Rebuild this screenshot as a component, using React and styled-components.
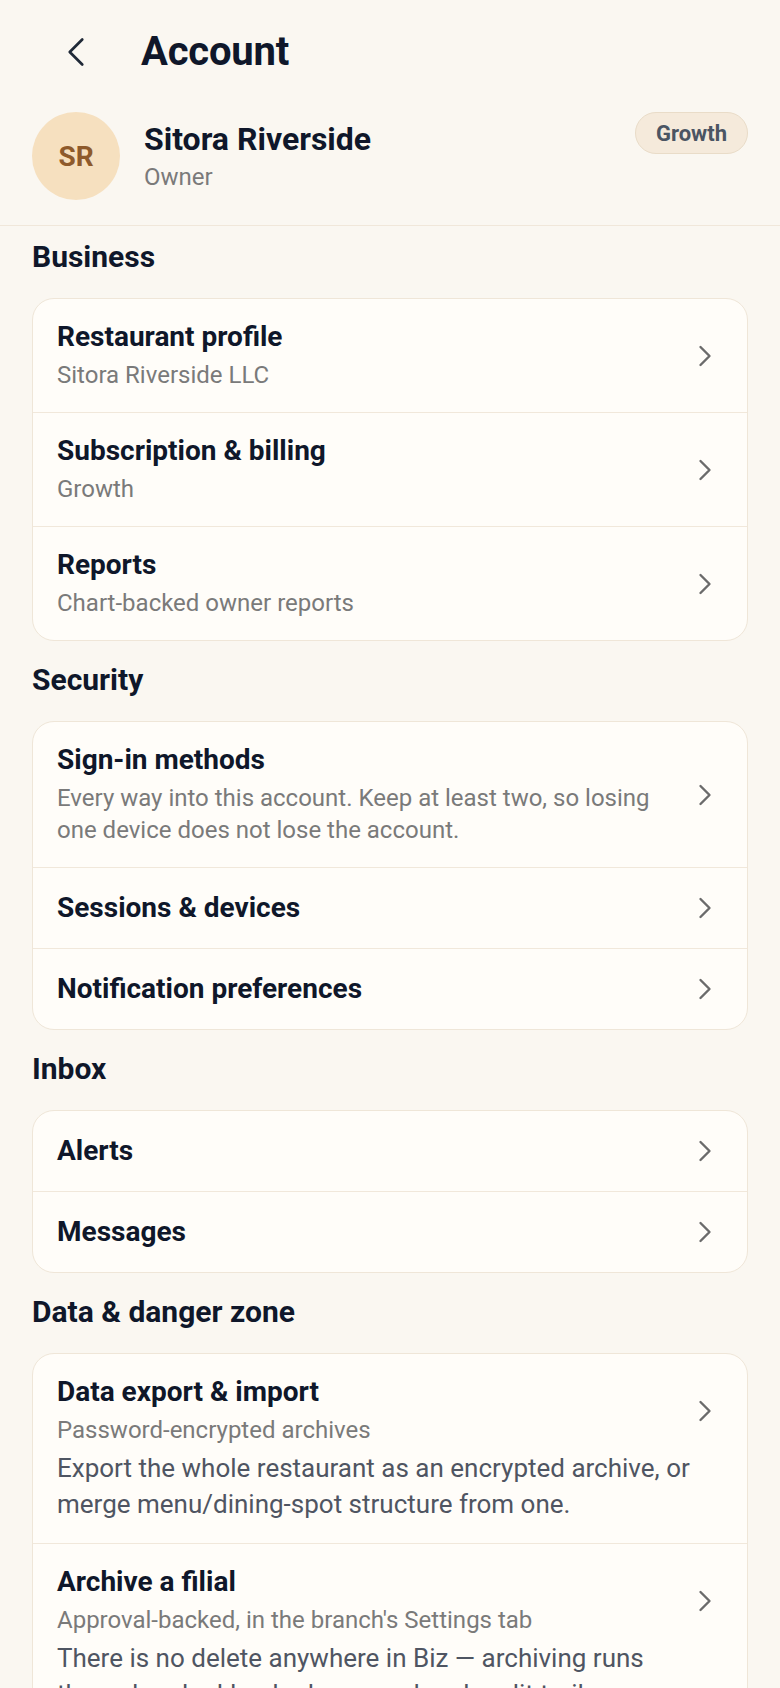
import React from "react";
import styled, { createGlobalStyle } from "styled-components";

const Global = createGlobalStyle`
  html, body { margin: 0; padding: 0; }
  body {
    background: #FAF7F1;
    font-family: Roboto, "Noto Sans", "Liberation Sans", sans-serif;
    color: #0F172A;
    -webkit-font-smoothing: antialiased;
  }
  * { box-sizing: border-box; }
`;

const Page = styled.div`
  width: 780px;
  min-height: 1688px;
  background: #FAF7F1;
`;

const Header = styled.header`
  display: flex;
  align-items: center;
  gap: 21px;
  padding: 24px 32px 0 32px;
  height: 80px;
`;

const BackButton = styled.button`
  width: 88px;
  height: 56px;
  border: none;
  background: transparent;
  padding: 0;
  display: flex;
  align-items: center;
  justify-content: center;
  color: #1F2937;
  cursor: pointer;
`;

const Title = styled.h1`
  margin: 0;
  font-size: 40px;
  line-height: 56px;
  font-weight: 700;
  color: #0F172A;
  letter-spacing: -0.2px;
`;

const Profile = styled.section`
  display: flex;
  align-items: center;
  gap: 24px;
  padding: 32px 32px 25px 32px;
  border-bottom: 1px solid #F0E7DA;
`;

const Avatar = styled.div`
  width: 88px;
  height: 88px;
  border-radius: 50%;
  background: #F6E0BF;
  color: #8E5A2B;
  font-size: 28px;
  font-weight: 700;
  display: flex;
  align-items: center;
  justify-content: center;
  flex-shrink: 0;
`;

const ProfileText = styled.div`
  flex: 1;
  display: flex;
  flex-direction: column;
  gap: 3px;
`;

const Name = styled.div`
  font-size: 32px;
  line-height: 38px;
  font-weight: 700;
  color: #0F172A;
`;

const Role = styled.div`
  font-size: 24px;
  line-height: 32px;
  color: #7A7A7A;
`;

const Badge = styled.span`
  align-self: flex-start;
  height: 42px;
  padding: 0 20px;
  border-radius: 21px;
  background: #F5EADB;
  border: 1px solid #E9DCC8;
  color: #4B5563;
  font-size: 22px;
  font-weight: 700;
  display: inline-flex;
  align-items: center;
`;

const Content = styled.main`
  display: flex;
  flex-direction: column;
  gap: 22px;
  padding: 14px 32px 0 32px;
`;

const Section = styled.section`
  display: flex;
  flex-direction: column;
  gap: 24px;
`;

const SectionTitle = styled.h2`
  margin: 0;
  font-size: 30px;
  line-height: 34px;
  font-weight: 700;
  color: #0F172A;
`;

const Card = styled.div`
  background: #FFFDF9;
  border: 1px solid #EFE6D8;
  border-radius: 22px;
  overflow: hidden;
`;

const Row = styled.div`
  padding: ${(p) => (p.$single ? "22px 24px" : "21px 24px")};
  border-top: ${(p) => (p.$first ? "none" : "1px solid #F1E8DB")};
  display: flex;
  flex-direction: column;
  gap: 4px;
`;

const RowMain = styled.div`
  display: flex;
  align-items: center;
  gap: 24px;
`;

const RowText = styled.div`
  flex: 1;
  min-width: 0;
  display: flex;
  flex-direction: column;
  gap: 5px;
`;

const RowTitle = styled.div`
  font-size: 28px;
  line-height: 34px;
  font-weight: 700;
  color: #0F172A;
`;

const RowSub = styled.div`
  font-size: 24px;
  line-height: 32px;
  color: #7A7A7A;
`;

const RowDesc = styled.div`
  font-size: 26px;
  line-height: 36px;
  color: #4F5562;
`;

const Chevron = styled.span`
  width: 36px;
  height: 36px;
  display: flex;
  align-items: center;
  justify-content: center;
  color: #6B6B6B;
  flex-shrink: 0;
`;

const ChevronRight = () => (
  <svg width="36" height="36" viewBox="0 0 24 24" fill="none" stroke="currentColor" strokeWidth="1.6" strokeLinecap="round" strokeLinejoin="round">
    <path d="m9 18 6-6-6-6" />
  </svg>
);

const ChevronLeft = () => (
  <svg width="50" height="50" viewBox="0 0 24 24" fill="none" stroke="currentColor" strokeWidth="1.3" strokeLinecap="round" strokeLinejoin="round">
    <path d="m15 18-6-6 6-6" />
  </svg>
);

const sections = [
  {
    title: "Business",
    rows: [
      { title: "Restaurant profile", sub: "Sitora Riverside LLC" },
      { title: "Subscription & billing", sub: "Growth" },
      { title: "Reports", sub: "Chart-backed owner reports" },
    ],
  },
  {
    title: "Security",
    rows: [
      {
        title: "Sign-in methods",
        sub: "Every way into this account. Keep at least two, so losing one device does not lose the account.",
      },
      { title: "Sessions & devices" },
      { title: "Notification preferences" },
    ],
  },
  {
    title: "Inbox",
    rows: [{ title: "Alerts" }, { title: "Messages" }],
  },
  {
    title: "Data & danger zone",
    rows: [
      {
        title: "Data export & import",
        sub: "Password-encrypted archives",
        desc: "Export the whole restaurant as an encrypted archive, or merge menu/dining-spot structure from one.",
      },
      {
        title: "Archive a filial",
        sub: "Approval-backed, in the branch's Settings tab",
        desc: "There is no delete anywhere in Biz — archiving runs through a dual-backed approval and audit trail.",
      },
    ],
  },
];

export default function App() {
  return (
    <Page>
      <Global />
      <Header>
        <BackButton aria-label="Back">
          <ChevronLeft />
        </BackButton>
        <Title>Account</Title>
      </Header>
      <Profile>
        <Avatar>SR</Avatar>
        <ProfileText>
          <Name>Sitora Riverside</Name>
          <Role>Owner</Role>
        </ProfileText>
        <Badge>Growth</Badge>
      </Profile>
      <Content>
        {sections.map((s) => (
          <Section key={s.title}>
            <SectionTitle>{s.title}</SectionTitle>
            <Card>
              {s.rows.map((r, i) => (
                <Row key={r.title} $first={i === 0} $single={!r.sub}>
                  <RowMain>
                    <RowText>
                      <RowTitle>{r.title}</RowTitle>
                      {r.sub && <RowSub>{r.sub}</RowSub>}
                    </RowText>
                    <Chevron>
                      <ChevronRight />
                    </Chevron>
                  </RowMain>
                  {r.desc && <RowDesc>{r.desc}</RowDesc>}
                </Row>
              ))}
            </Card>
          </Section>
        ))}
      </Content>
    </Page>
  );
}
